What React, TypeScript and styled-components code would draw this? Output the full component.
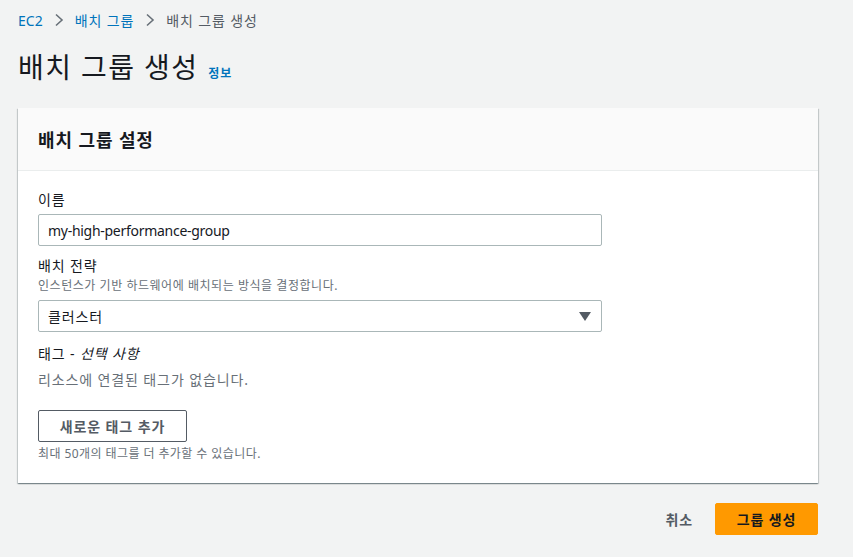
import React from 'react';
import styled, { createGlobalStyle } from 'styled-components';

const GlobalStyle = createGlobalStyle`
  html, body {
    margin: 0;
    padding: 0;
    background: #f2f3f3;
  }
  body {
    font-family: "Noto Sans", "Noto Sans CJK KR", sans-serif;
    color: #16191f;
    letter-spacing: 0.055em;
  }
`;

const Page = styled.div`
  width: 800px;
  padding: 8px 0 0 18px;
`;

const Breadcrumbs = styled.nav`
  display: flex;
  align-items: center;
  gap: 11px;
  height: 24px;
  font-size: 14px;
`;

const Crumb = styled.a<{ $current?: boolean }>`
  color: ${(p) => (p.$current ? '#545b64' : '#0073bb')};
  text-decoration: none;
`;

const Latin = styled.span`
  letter-spacing: 0;
`;

const Chevron = () => (
  <svg width="10" height="14" viewBox="0 0 10 14" fill="none">
    <path d="M2 1.5 L8 7 L2 12.5" stroke="#687078" strokeWidth="1.6" />
  </svg>
);

const TitleRow = styled.div`
  display: flex;
  align-items: baseline;
  gap: 10px;
  margin-top: 17px;
`;

const Title = styled.h1`
  margin: 0;
  font-size: 28px;
  font-weight: 400;
  line-height: 36px;
  letter-spacing: 0.05em;
`;

const InfoLink = styled.a`
  font-size: 12px;
  font-weight: 700;
  color: #0073bb;
  text-decoration: none;
`;

const Card = styled.section`
  margin-top: 23px;
  background: #fff;
  box-shadow: 0 1px 1px 0 rgba(0, 28, 36, 0.3), 1px 1px 1px 0 rgba(0, 28, 36, 0.15),
    -1px 1px 1px 0 rgba(0, 28, 36, 0.15);
`;

const CardHeader = styled.header`
  display: flex;
  align-items: center;
  height: 63px;
  padding: 0 20px;
  background: #fafafa;
  border-bottom: 1px solid #eaeded;
  box-sizing: border-box;
`;

const CardTitle = styled.h2`
  margin: 0;
  font-size: 18px;
  font-weight: 700;
`;

const CardBody = styled.div`
  display: flex;
  flex-direction: column;
  padding: 18px 20px 20px;
`;

const Field = styled.div<{ $gap?: number }>`
  display: flex;
  flex-direction: column;
  margin-top: ${(p) => p.$gap ?? 0}px;
`;

const Label = styled.label`
  font-size: 14px;
  line-height: 22px;
`;

const Optional = styled.i`
  font-style: italic;
`;

const Description = styled.div`
  font-size: 12px;
  line-height: 18px;
  letter-spacing: 0.045em;
  color: #687078;
`;

const Control = styled.div<{ $top?: number }>`
  display: flex;
  align-items: center;
  justify-content: space-between;
  width: 564px;
  height: 32px;
  margin-top: ${(p) => p.$top ?? 3}px;
  padding: 0 10px 0 9px;
  box-sizing: border-box;
  border: 1px solid #aab7b8;
  border-radius: 2px;
  font-size: 14px;
  color: #16191f;
`;

const InputText = styled.span`
  letter-spacing: -0.02em;
`;

const Caret = () => (
  <svg width="12" height="9" viewBox="0 0 12 9">
    <path d="M0 0 H12 L6 9 Z" fill="#545b64" />
  </svg>
);

const Muted = styled.div`
  font-size: 14px;
  line-height: 22px;
  color: #687078;
  margin-top: 4px;
`;

const OutlineButton = styled.button`
  align-self: flex-start;
  margin-top: 19px;
  height: 32px;
  width: 149px;
  padding: 0;
  background: #fff;
  border: 1px solid #545b64;
  border-radius: 2px;
  font-family: inherit;
  font-size: 14px;
  font-weight: 700;
  letter-spacing: inherit;
  color: #545b64;
`;

const Hint = styled.div`
  margin-top: 3px;
  font-size: 12px;
  line-height: 18px;
  letter-spacing: 0.035em;
  color: #687078;
`;

const Footer = styled.div`
  display: flex;
  justify-content: flex-end;
  align-items: center;
  gap: 6px;
  margin-top: 20px;
`;

const LinkButton = styled.button`
  background: none;
  border: none;
  padding: 0 16px;
  height: 32px;
  font-family: inherit;
  font-size: 14px;
  font-weight: 700;
  letter-spacing: inherit;
  color: #545b64;
`;

const PrimaryButton = styled.button`
  height: 32px;
  width: 103px;
  background: #ff9900;
  border: 1px solid #ff9900;
  border-radius: 2px;
  font-family: inherit;
  font-size: 14px;
  font-weight: 700;
  letter-spacing: inherit;
  color: #16191f;
`;

export default function App() {
  return (
    <>
      <GlobalStyle />
      <Page>
        <Breadcrumbs>
          <Crumb href="#">
            <Latin>EC2</Latin>
          </Crumb>
          <Chevron />
          <Crumb href="#">배치 그룹</Crumb>
          <Chevron />
          <Crumb $current>배치 그룹 생성</Crumb>
        </Breadcrumbs>

        <TitleRow>
          <Title>배치 그룹 생성</Title>
          <InfoLink href="#">정보</InfoLink>
        </TitleRow>

        <Card>
          <CardHeader>
            <CardTitle>배치 그룹 설정</CardTitle>
          </CardHeader>
          <CardBody>
            <Field>
              <Label>이름</Label>
              <Control>
                <InputText>my-high-performance-group</InputText>
              </Control>
            </Field>

            <Field $gap={9}>
              <Label>배치 전략</Label>
              <Description>인스턴스가 기반 하드웨어에 배치되는 방식을 결정합니다.</Description>
              <Control $top={5}>
                <span>클러스터</span>
                <Caret />
              </Control>
            </Field>

            <Field $gap={11}>
              <Label>
                태그 - <Optional>선택 사항</Optional>
              </Label>
              <Muted>리소스에 연결된 태그가 없습니다.</Muted>
              <OutlineButton>새로운 태그 추가</OutlineButton>
              <Hint>최대 50개의 태그를 더 추가할 수 있습니다.</Hint>
            </Field>
          </CardBody>
        </Card>

        <Footer>
          <LinkButton>취소</LinkButton>
          <PrimaryButton>그룹 생성</PrimaryButton>
        </Footer>
      </Page>
    </>
  );
}
